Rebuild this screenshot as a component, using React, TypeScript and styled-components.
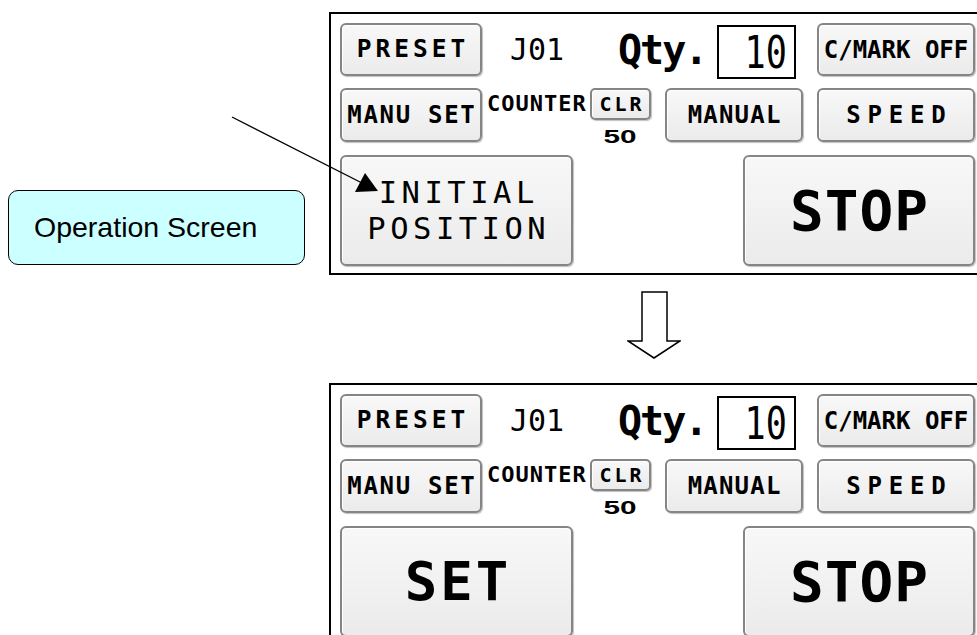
import React from 'react'
import styled, { createGlobalStyle } from 'styled-components'

const MONO = `"DejaVu Sans Mono", "Liberation Mono", monospace`;

const GlobalStyle = createGlobalStyle`
	html, body {
		margin: 0;
		padding: 0;
		background: #fff;
		overflow: hidden;
	}
`;

const Page = styled.div`
	position: relative;
	display: flex;
	width: 977px;
	height: 635px;
	overflow: hidden;
	background: #fff;
`;

/** Left column holding the caption balloon */
const Side = styled.div`
	width: 329px;
	flex-shrink: 0;
	padding-top: 190px;
	box-sizing: border-box;
`;

const Callout = styled.div`
	margin-left: 8px;
	width: 297px;
	height: 75px;
	box-sizing: border-box;
	border: 1.5px solid #000;
	border-radius: 10px;
	background: #ccffff;
	display: flex;
	align-items: center;
	padding-left: 25px;
	font-family: "Liberation Sans", Arial, sans-serif;
	font-size: 28.5px;
	color: #000;
`;

const Screens = styled.div`
	display: flex;
	flex-direction: column;
	padding-top: 12px;
	flex-shrink: 0;
`;

const Panel = styled.div`
	width: 657px;
	height: 263px;
	box-sizing: border-box;
	border: 2px solid #000;
	padding: 9px 0 0 9px;
	display: flex;
	flex-direction: column;
	flex-shrink: 0;
	background: #fff;
`;

const Row = styled.div<{ $h: number }>`
	display: flex;
	align-items: flex-start;
	height: ${p => p.$h}px;
	flex-shrink: 0;
`;

interface KeyProps {
	$w: number;
	$h: number;
	$size: number;
	$ls?: number;
	$weight?: number;
	$ml?: number;
	$radius?: number;
}
/** Touch panel push button */
const Key = styled.div<KeyProps>`
	width: ${p => p.$w}px;
	height: ${p => p.$h}px;
	margin-left: ${p => p.$ml ?? 0}px;
	flex-shrink: 0;
	box-sizing: border-box;
	display: flex;
	flex-direction: column;
	align-items: center;
	justify-content: center;
	border: 2px solid #858585;
	border-radius: ${p => p.$radius ?? 6}px;
	background: linear-gradient(#f8f8f8, #ebebeb);
	box-shadow: inset 1px 1px 0 #fff, 1px 1px 1px rgba(0,0,0,.25);
	font-family: ${MONO};
	font-size: ${p => p.$size}px;
	font-weight: ${p => p.$weight ?? 700};
	letter-spacing: ${p => p.$ls ?? 0}px;
	padding-left: ${p => Math.max(p.$ls ?? 0, 0)}px;
	line-height: 1;
	color: #000;
	white-space: pre;
`;

const KeyLine = styled.span<{ $lh: number }>`
	display: block;
	line-height: ${p => p.$lh}px;
`;

interface LabelProps {
	$size: number;
	$w: number;
	$h: number;
	$ls?: number;
	$weight?: number;
	$ml?: number;
}
const Label = styled.div<LabelProps>`
	width: ${p => p.$w}px;
	height: ${p => p.$h}px;
	margin-left: ${p => p.$ml ?? 0}px;
	display: flex;
	align-items: center;
	flex-shrink: 0;
	font-family: ${MONO};
	font-size: ${p => p.$size}px;
	font-weight: ${p => p.$weight ?? 400};
	letter-spacing: ${p => p.$ls ?? 0}px;
	color: #000;
	white-space: pre;
`;

const QtyBox = styled.div`
	width: 79px;
	height: 54px;
	margin-top: 2px;
	box-sizing: border-box;
	border: 2px solid #000;
	background: #fff;
	display: flex;
	align-items: center;
	justify-content: flex-end;
	padding-right: 7px;
	font-family: ${MONO};
	font-size: 44px;
	color: #000;
	flex-shrink: 0;
`;

/** Horizontal squeeze of a narrow LCD style figure */
const Squeeze = styled.span<{ $sx: number }>`
	display: inline-block;
	transform: scaleX(${p => p.$sx});
	transform-origin: right center;
`;

const CounterGroup = styled.div`
	display: flex;
	align-items: flex-start;
	margin-left: 5px;
	flex-shrink: 0;
`;

const ClearStack = styled.div`
	display: flex;
	flex-direction: column;
	align-items: center;
	margin-left: 3px;
`;

const CountValue = styled.div`
	margin-top: 10px;
	font-family: "Liberation Sans", Arial, sans-serif;
	font-weight: 700;
	font-size: 18px;
	line-height: 14px;
	transform: scaleX(1.65);
	color: #000;
`;

const Gap = styled.div`
	height: 108px;
	box-sizing: border-box;
	padding: 16px 0 0 298px;
	flex-shrink: 0;
`;

const Overlay = styled.svg`
	position: absolute;
	left: 0;
	top: 0;
	pointer-events: none;
`;

const DownArrow = () => (
	<svg width="54" height="68" viewBox="0 0 54 68">
		<path d="M15 1 H40 V50 H53 L27 67 L1 50 H15 Z" fill="#fff" stroke="#000" strokeWidth="1.5" />
	</svg>
);

const Screen = ({ action }: { action: React.ReactNode }) => (
	<Panel>
		<Row $h={65}>
			<Key $w={142} $h={53} $size={24.5} $ls={4}>PRESET</Key>
			<Label $w={108} $h={53} $ml={28} $size={30}>J01</Label>
			<Label $w={99} $h={53} $size={40} $weight={700} $ls={-2}>Qty.</Label>
			<QtyBox><Squeeze $sx={0.8}>10</Squeeze></QtyBox>
			<Key $w={158} $h={53} $ml={21} $size={24} $ls={0}>C/MARK OFF</Key>
		</Row>
		<Row $h={67}>
			<Key $w={142} $h={54} $size={24} $ls={1.7}>MANU SET</Key>
			<CounterGroup>
				<Label $w={100} $h={30} $size={22} $weight={700} $ls={1}>COUNTER</Label>
				<ClearStack>
					<Key $w={61} $h={32} $size={20} $ls={3} $radius={5}>CLR</Key>
					<CountValue>50</CountValue>
				</ClearStack>
			</CounterGroup>
			<Key $w={138} $h={54} $ml={14} $size={24} $ls={1.2}>MANUAL</Key>
			<Key $w={158} $h={54} $ml={14} $size={24} $ls={6.8}>SPEED</Key>
		</Row>
		<Row $h={111}>
			{action}
			<Key $w={232} $h={111} $ml={170} $size={56} $ls={1}>STOP</Key>
		</Row>
	</Panel>
);

export default function App() {
	return (
		<Page>
			<GlobalStyle />
			<Side>
				<Callout>Operation Screen</Callout>
			</Side>
			<Screens>
				<Screen
					action={
						<Key $w={233} $h={111} $size={30.5} $ls={4.5} $weight={400}>
							<KeyLine $lh={36}>INITIAL</KeyLine>
							<KeyLine $lh={36}>POSITION</KeyLine>
						</Key>
					}
				/>
				<Gap>
					<DownArrow />
				</Gap>
				<Screen action={<Key $w={233} $h={111} $size={54} $ls={3}>SET</Key>} />
			</Screens>
			<Overlay width="977" height="635" viewBox="0 0 977 635">
				<line x1="232" y1="117" x2="362" y2="183" stroke="#000" strokeWidth="1.4" />
				<polygon points="355,192 365,173 378,191" fill="#000" />
			</Overlay>
		</Page>
	);
}
